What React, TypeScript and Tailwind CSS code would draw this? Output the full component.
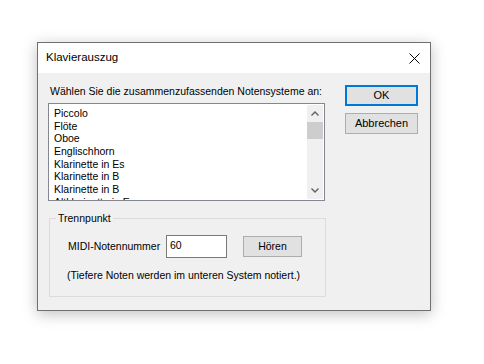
const ITEMS = [
  "Piccolo",
  "Flöte",
  "Oboe",
  "Englischhorn",
  "Klarinette in Es",
  "Klarinette in B",
  "Klarinette in B",
  "Altklarinette in Es",
];

const sans = "font-['Liberation_Sans',Arial,sans-serif]";

function ListBox() {
  return (
    <div className="flex h-[98px] w-[277px] border border-[#828790] bg-white px-[1px] pt-[1px]">
      <div className="flex-1 overflow-hidden pl-[4px] pt-[2px]">
        {ITEMS.map((item, i) => (
          <div key={i} className="h-[12.67px] text-[10.5px] leading-[12.67px] text-black whitespace-nowrap">
            {item}
          </div>
        ))}
      </div>
      <div className="mb-[1px] flex w-[16px] flex-col bg-[#f0f0f0]">
        <div className="flex h-[17px] items-center justify-center">
          <svg width="8" height="5" viewBox="0 0 8 5">
            <path d="M0.5 4.5 L4 1 L7.5 4.5" fill="none" stroke="#606060" strokeWidth="1.4" />
          </svg>
        </div>
        <div className="h-[17px] bg-[#cdcdcd]" />
        <div className="flex-1" />
        <div className="flex h-[17px] items-center justify-center">
          <svg width="8" height="5" viewBox="0 0 8 5">
            <path d="M0.5 0.5 L4 4 L7.5 0.5" fill="none" stroke="#606060" strokeWidth="1.4" />
          </svg>
        </div>
      </div>
    </div>
  );
}

function DlgButton({ label, primary }: { label: string; primary?: boolean }) {
  return (
    <button
      className={`flex h-[21px] items-center justify-center bg-[#e1e1e1] text-[11px] text-black ${
        primary ? "border-2 border-[#0078d7]" : "border border-[#adadad]"
      }`}
    >
      {label}
    </button>
  );
}

export default function App() {
  return (
    <div className={`h-[364px] w-[484px] bg-white pl-[37px] pt-[42px] ${sans}`}>
      <div className="flex h-[269px] w-[394px] flex-col border border-[#707070] bg-[#f0f0f0] shadow-[0_3px_14px_rgba(0,0,0,0.25)]">
        <div className="flex h-[30px] items-center justify-between bg-white pl-[8px] pr-[10px]">
          <span className="text-[11.5px] text-black">Klavierauszug</span>
          <svg width="11" height="11" viewBox="0 0 11 11">
            <path d="M0.5 0.5 L10.5 10.5 M10.5 0.5 L0.5 10.5" stroke="#000" strokeWidth="1" />
          </svg>
        </div>

        <div className="flex pl-[10px] pt-[12px]">
          <div className="flex w-[278px] flex-col">
            <div className="ml-[2px] h-[13px] text-[10.5px] leading-[13px] text-black whitespace-nowrap">
              Wählen Sie die zusammenzufassenden Notensysteme an:
            </div>
            <div className="mt-[5px]">
              <ListBox />
            </div>

            <fieldset className="ml-[1px] mt-[11px] h-[85px] w-[277px] border border-[#dcdcdc] pl-[6px]">
              <legend className="px-[2px] text-[10.5px] leading-[13px] text-black">Trennpunkt</legend>
              <div className="ml-[12px] mt-[10px] flex items-center">
                <span className="w-[98px] text-[10.5px] text-black">MIDI-Notennummer</span>
                <div className="flex h-[23px] w-[61px] items-start border border-[#7a7a7a] bg-white pl-[3px] pt-[3px] text-[10.5px] leading-[13px] text-black">
                  60
                </div>
                <button className="ml-[16px] flex h-[21px] w-[59px] items-center justify-center border border-[#adadad] bg-[#e1e1e1] text-[10.5px] text-black">
                  Hören
                </button>
              </div>
              <div className="ml-[11px] mt-[11px] text-[10.5px] leading-[13px] text-black whitespace-nowrap">
                (Tiefere Noten werden im unteren System notiert.)
              </div>
            </fieldset>
          </div>

          <div className="ml-[19px] flex w-[73px] flex-col gap-[7px]">
            <DlgButton label="OK" primary />
            <DlgButton label="Abbrechen" />
          </div>
        </div>
      </div>
    </div>
  );
}
